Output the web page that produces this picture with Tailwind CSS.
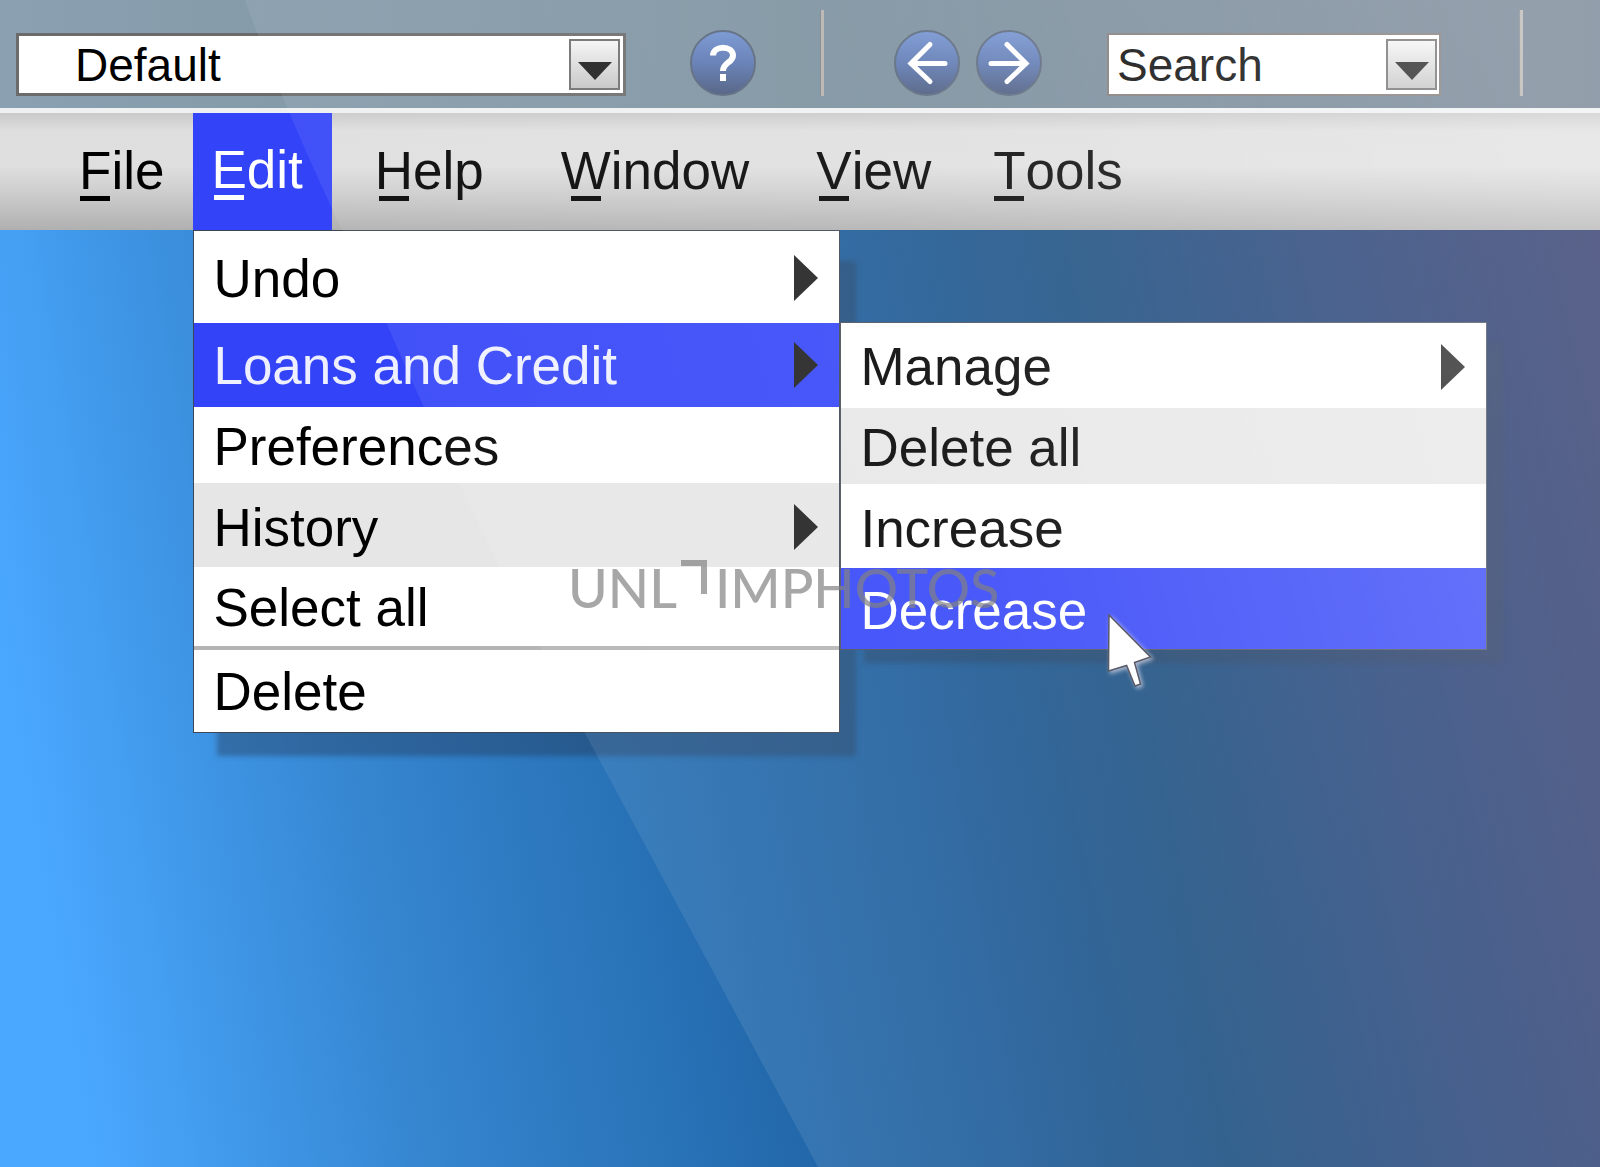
<!DOCTYPE html>
<html lang="en">
<head>
  <meta charset="UTF-8" />
  <meta name="viewport" content="width=device-width, initial-scale=1.0"/>
  <title>Loans and Credit</title>

  <!-- Tailwind -->
  <script src="https://cdn.jsdelivr.net/npm/@tailwindcss/browser@4"></script>
</head>

<body class="relative min-h-screen flex flex-col overflow-hidden font-['Liberation_Sans',Arial,sans-serif] text-black bg-[linear-gradient(80deg,#4aa8ff_0%,#4aa8ff_5%,#3585cf_24%,#2268aa_45%,#1c5c9a_55%,#13497d_68%,#193870_82%,#182158_100%)]">

  <!-- Toolbar -->
  <header class="flex items-end h-[108px] pl-4 pb-3 bg-linear-to-r from-[#8ba0b0] via-[#7a909e] to-[#68788a]">
    <div class="relative w-[610px] h-[63px]">
      <select aria-label="Profile" class="appearance-none w-full h-full pl-14 text-[46px] leading-none bg-white border-3 border-[#6b6b6b]">
        <option>Default</option>
      </select>
      <span class="pointer-events-none absolute right-1.5 top-1.5 w-[51px] h-[51px] flex items-center justify-center pt-3 border-2 border-[#6e6e6e] bg-linear-to-b from-[#f4f4f4] to-[#c4c4c4]">
        <svg class="w-[34px] h-[18px]" viewBox="0 0 34 18"><path d="M0 0h34L17 18z" fill="#1c1c1c"/></svg>
      </span>
    </div>

    <button aria-label="Help" class="ml-16">
      <svg class="size-[66px]" viewBox="0 0 66 66">
        <defs>
          <linearGradient id="disc" x1="0" y1="0" x2="0" y2="1">
            <stop offset="0" stop-color="#7090d0"/>
            <stop offset="0.5" stop-color="#5a76b0"/>
            <stop offset="1" stop-color="#46567a"/>
          </linearGradient>
        </defs>
        <circle cx="33" cy="33" r="32" fill="url(#disc)" stroke="#56647a" stroke-width="2"/>
        <path d="M23 25.500C23 15 43 15 43 25.500C43 33 33 32 33 41" fill="none" stroke="#fff" stroke-width="6"/>
        <path d="M30 44h6v7h-6z" fill="#fff"/>
      </svg>
    </button>

    <div class="ml-16 w-1 h-[86px] bg-[#b5b1ae] border-l border-[#7d8388]"></div>

    <button aria-label="Back" class="ml-[70px]">
      <svg class="size-[66px]" viewBox="0 0 66 66">
        <circle cx="33" cy="33" r="32" fill="url(#disc)" stroke="#56647a" stroke-width="2"/>
        <path d="M36 14.500L17 33.500L36 51.500M17 33.500H51" fill="none" stroke="#fff" stroke-width="5" stroke-linecap="round" stroke-linejoin="miter"/>
      </svg>
    </button>
    <button aria-label="Forward" class="ml-4">
      <svg class="size-[66px]" viewBox="0 0 66 66">
        <circle cx="33" cy="33" r="32" fill="url(#disc)" stroke="#56647a" stroke-width="2"/>
        <path d="M31 14.500L50 33.500L31 51.500M50 33.500H15" fill="none" stroke="#fff" stroke-width="5" stroke-linecap="round" stroke-linejoin="miter"/>
      </svg>
    </button>

    <div class="relative ml-[65px] w-[334px] h-[63px]">
      <select aria-label="Search" class="appearance-none w-full h-full pl-2 text-[46px] leading-none bg-white border-2 border-[#7c7674]">
        <option>Search</option>
      </select>
      <span class="pointer-events-none absolute right-1 top-1.5 w-[51px] h-[51px] flex items-center justify-center pt-3 border-2 border-[#6e6e6e] bg-linear-to-b from-[#f4f4f4] to-[#c4c4c4]">
        <svg class="w-[34px] h-[18px]" viewBox="0 0 34 18"><path d="M0 0h34L17 18z" fill="#1c1c1c"/></svg>
      </span>
    </div>

    <div class="ml-[78px] w-1 h-[86px] bg-[#b5b1ae] border-l border-[#7d8388]"></div>
  </header>

  <!-- Menu bar -->
  <nav class="relative flex items-stretch h-[122px] pl-[79px] border-t-5 border-[#eef0f2] text-[53px] leading-none bg-[linear-gradient(to_bottom,#c9c9c9_0%,#dedede_15%,#dfdfdf_45%,#d0d0d0_65%,#b0b0b0_100%)]">
    <a href="#" class="flex items-center pb-0.5"><span class="relative">F<i class="absolute left-1/2 -translate-x-1/2 -bottom-1 w-[30px] h-[5px] bg-current"></i></span>ile</a>

    <div class="relative ml-[29px]">
      <a href="#" class="flex items-center h-full pb-1 pl-[18px] pr-[29px] bg-[#3344f8] text-white"><span class="relative">E<i class="absolute left-1/2 -translate-x-1/2 -bottom-1 w-[30px] h-[5px] bg-current"></i></span>dit</a>

      <!-- Edit menu -->
      <ul class="absolute left-0 top-full w-[647px] border border-[#3c4654] bg-white text-[53px] shadow-[20px_27px_5px_-4px_rgba(35,50,75,0.38)]">
        <li><a href="#" class="flex items-center justify-between h-[92px] pt-0.5 pl-[19px] pr-[21px]">Undo
          <svg class="w-[24px] h-[46px]" viewBox="0 0 24 46"><path d="M0 0L24 23L0 46z" fill="#1e1e1e"/></svg></a></li>
        <li class="relative"><a href="#" class="flex items-center justify-between h-[84px] pl-[19px] pr-[21px] bg-[#3344f8] text-[#eef0ff]">Loans and Credit
          <svg class="w-[24px] h-[46px]" viewBox="0 0 24 46"><path d="M0 0L24 23L0 46z" fill="#1e1e1e"/></svg></a>

          <!-- Loans and Credit submenu -->
          <ul class="absolute left-full -top-px ml-px w-[647px] border border-[#4a4f5c] bg-white text-black shadow-[20px_17px_5px_-4px_rgba(35,50,75,0.38)]">
            <li><a href="#" class="flex items-center justify-between h-[85px] pt-0.5 pl-[19px] pr-[21px]">Manage
              <svg class="w-[24px] h-[46px]" viewBox="0 0 24 46"><path d="M0 0L24 23L0 46z" fill="#1e1e1e"/></svg></a></li>
            <li><a href="#" class="flex items-center h-[76px] pt-0.5 pl-[19px] bg-[#e7e7e7]">Delete all</a></li>
            <li><a href="#" class="flex items-center h-[84px] pt-1 pl-[19px]">Increase</a></li>
            <li><a href="#" class="flex items-center h-[81px] pt-1 pl-[19px] bg-[#3344f8] text-white">Decrease</a></li>
          </ul>
        </li>
        <li><a href="#" class="flex items-center h-[76px] pt-0.5 pl-[19px]">Preferences</a></li>
        <li><a href="#" class="flex items-center justify-between h-[84px] pt-1 pl-[19px] pr-[21px] bg-[#e6e6e6]">History
          <svg class="w-[24px] h-[46px]" viewBox="0 0 24 46"><path d="M0 0L24 23L0 46z" fill="#1e1e1e"/></svg></a></li>
        <li><a href="#" class="flex items-center h-[79px] pt-0.5 pl-[19px]">Select all</a></li>
        <li class="border-t-4 border-[#b4b4b4]"><a href="#" class="flex items-center h-[82px] pl-[19px]">Delete</a></li>
      </ul>
    </div>

    <a href="#" class="flex items-center pb-0.5 ml-[43px]"><span class="relative">H<i class="absolute left-1/2 -translate-x-1/2 -bottom-1 w-[30px] h-[5px] bg-current"></i></span>elp</a>
    <a href="#" class="flex items-center pb-0.5 ml-[77px]"><span class="relative">W<i class="absolute left-1/2 -translate-x-1/2 -bottom-1 w-[30px] h-[5px] bg-current"></i></span>indow</a>
    <a href="#" class="flex items-center pb-0.5 ml-[67px]"><span class="relative">V<i class="absolute left-1/2 -translate-x-1/2 -bottom-1 w-[30px] h-[5px] bg-current"></i></span>iew</a>
    <a href="#" class="flex items-center pb-0.5 ml-[62px]"><span class="relative">T<i class="absolute left-1/2 -translate-x-1/2 -bottom-1 w-[30px] h-[5px] bg-current"></i></span>ools</a>
  </nav>

  <!-- Screen glare -->
  <svg class="pointer-events-none absolute inset-0 w-full h-full" viewBox="0 0 1600 1167" preserveAspectRatio="none">
    <defs>
      <linearGradient id="glare" gradientUnits="userSpaceOnUse" x1="400" y1="620" x2="1600" y2="320">
        <stop offset="0" stop-color="#fff" stop-opacity="0.07"/>
        <stop offset="0.45" stop-color="#fff" stop-opacity="0.11"/>
        <stop offset="1" stop-color="#fff" stop-opacity="0.28"/>
      </linearGradient>
    </defs>
    <path d="M245 0C285 110 325 195 386 322C450 470 520 610 585 733L818 1167H1600V0z" fill="url(#glare)"/>
  </svg>

  <!-- Watermark -->
  <div class="pointer-events-none absolute left-[568px] top-[558px] flex text-[#828282]/70 font-['Lato',sans-serif] font-medium text-[54px] leading-[60px]">
    <span>UNL</span>
    <svg class="ml-1 w-[26px] h-[36px]" viewBox="0 0 26 36"><path d="M0 5H23V36" fill="none" stroke="#828282" stroke-opacity="0.7" stroke-width="6"/></svg>
    <span class="ml-2">IMPHOTOS</span>
  </div>

  <!-- Mouse pointer -->
  <svg class="pointer-events-none absolute left-[1104px] top-[610px] w-[56px] h-[84px] drop-shadow-[2px_2px_2px_rgba(225,225,240,0.7)]" viewBox="0 0 56 84">
    <path d="M5 5L46.500 47L30.500 52.500L36.500 74L31 76L22.600 55.500L4.500 61z" fill="#fff" stroke="#5a5a66" stroke-width="1.500"/>
  </svg>

</body>
</html>
